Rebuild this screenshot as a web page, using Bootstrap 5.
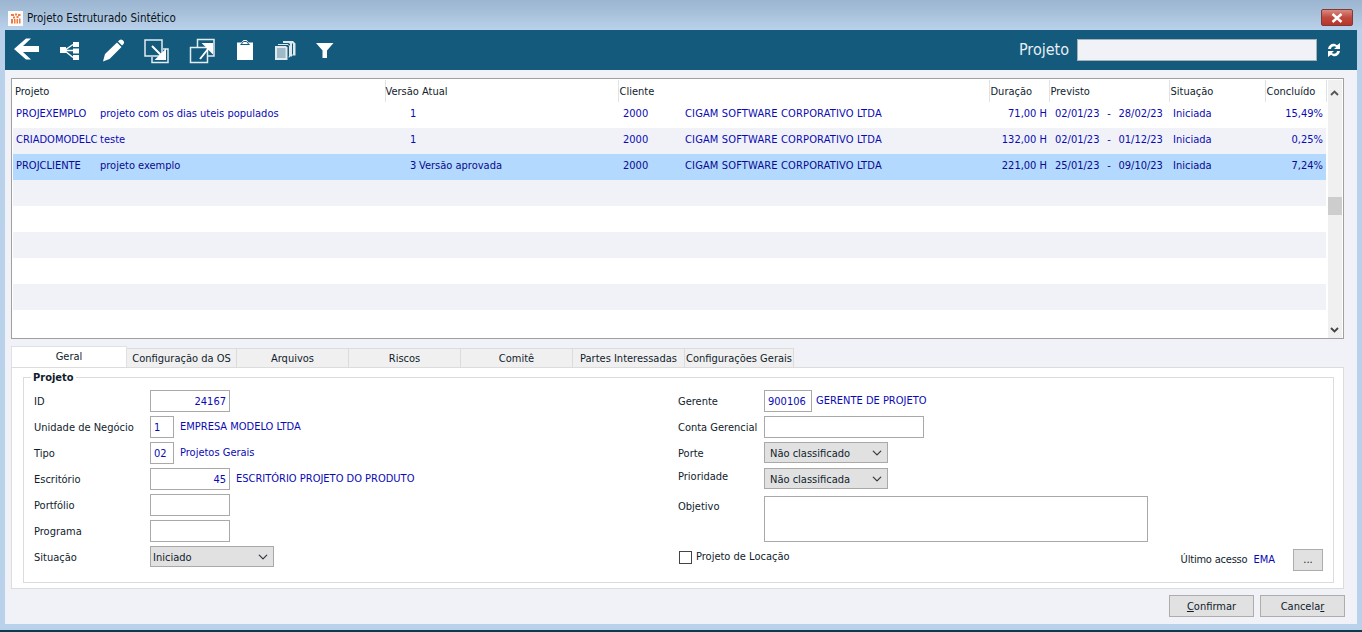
<!DOCTYPE html>
<html lang="pt-BR">
<head>
<meta charset="utf-8">
<title>Projeto Estruturado Sintético</title>
<link href="https://cdn.jsdelivr.net/npm/bootstrap@5.3.0/dist/css/bootstrap.min.css" rel="stylesheet">
<style>
html,body{height:632px;overflow:hidden}
body{background:#b9d1ea;font-family:"DejaVu Sans Condensed","DejaVu Sans",sans-serif;font-stretch:condensed;font-size:11px;line-height:14px;color:#101c2c}
.erp-frame{height:630px;border-bottom:0}
.erp-edge{height:2px;background:#0b3c4c}
.erp-title{height:30px;background:linear-gradient(#9bb4cf,#b9d1ea);padding:6px 9px 0 8px;color:#0c1420;font-size:11.500px}
.erp-logo{width:15px;height:15px;margin-right:4px}
.erp-close{width:32px;height:17px;margin-top:-1px;border:1px solid #7d3a38;border-radius:2px;background:linear-gradient(#d98a80,#c04a3e 50%,#b8352a);color:#fff;padding:0;line-height:0}
.erp-main{margin:0 5px;height:594px;background:#f0f2f8}
.erp-tools{height:40px;background:#135a7c;padding-right:16px}
.erp-tools svg{display:block}
.erp-tool{padding:0;border:0;background:none;line-height:0}
.erp-search-label{font-size:16px;color:#e8eef4;margin-right:8px}
.erp-search{width:240px;height:22px;border:1px solid #a9b0b6;border-radius:0;background:#f0f2f8;padding:0 3px;font-size:11px}
.erp-refresh{margin-left:10px}
.erp-body{padding:8px 13px 0 6px}
.erp-gridbox{height:261px;background:#fff;border:1px solid #a0a0a0;padding:1px 0 0 1px}
.erp-table{width:1313px;table-layout:fixed;margin:0;--bs-table-bg:transparent;color:#0a0ab4;font-size:11px}
.erp-table th{height:22px;padding:1px 1px 0;font-weight:400;color:#101c2c;vertical-align:middle;border-right:1px solid #dfe3e8;white-space:nowrap}
.erp-table th:first-child{padding-left:2px}
.erp-table th.erp-h0{padding-left:0}
.erp-table td{height:26px;padding:0 0 3px 3px;vertical-align:middle;white-space:nowrap;overflow:hidden;color:#0a0ab4}
.erp-table tr.erp-alt td{background:#f0f2f8}
.erp-table tr.erp-sel td{background:#b3d9ff;color:#0a0a8c}
.erp-table td.erp-r{text-align:right;padding:0 3px 3px 0}
.erp-table td.erp-r2{padding-right:2px}
.erp-table td.erp-v{padding-left:25px}
.erp-table td.erp-d{padding-left:5px}
.erp-table td.erp-dt{padding-left:6px}
.erp-table td.erp-n{padding-left:5px;letter-spacing:.15px}
.erp-table td.erp-p{padding-left:0}
.erp-table td.erp-s{padding-left:4px}
.erp-dash{display:inline-block;width:19px;text-align:center}
.erp-scroll{width:17px;margin-left:1px;background:#f0f0f0;margin-right:1px}
.erp-up{margin-top:10px}
.erp-down{margin-bottom:5px}
.erp-thumb{height:18px;background:#cdcdcd;margin-top:101px}
.erp-tabs{margin-top:7px;border:0;height:21px;align-items:flex-end;flex-wrap:nowrap}
.erp-tabs .nav-link{height:19px;padding:1px 0 0;border:1px solid #dcdcdc;border-left-width:0;border-bottom:0;border-radius:0;background:#f0f0f0;color:#101c2c;font-size:11px;line-height:18px;text-align:center;margin:0;width:112px}
.erp-tabs .nav-link.active{height:21px;width:116px;background:#fff;border-left-width:1px;line-height:18px;color:#101c2c}
.erp-tabs .erp-w110{width:110px}
.erp-tabs .erp-w109{width:109px}
.erp-panel{height:222px;background:#fff;border:1px solid #dcdcdc;padding:3px 9px 0 11px}
.erp-set{height:212px;border:1px solid #dcdcdc;padding:0 10px 0 10px}
.erp-set legend{float:none;width:auto;margin:0 0 0 -3px;padding:0 2px;font-size:11px;font-weight:700;line-height:13px;color:#101c2c}
.erp-cols{display:grid;grid-template-columns:644px 645px;margin-top:6px}
.erp-stack{display:flex;flex-direction:column;gap:4px}
.erp-line{display:flex;align-items:center;height:22px}
.erp-lab{width:116px;flex:none;padding-top:2px}
.erp-rlab{width:86px;flex:none;padding-top:2px}
.erp-top{align-self:flex-start}
.erp-prio{padding-top:2px}
.erp-in{height:22px;border:1px solid #a9a9a9;border-radius:0;padding:0 3px;font-size:11px;color:#0a0ab4;background:#fff;flex:none}
.erp-in:focus{box-shadow:none;border-color:#a9a9a9}
.erp-w24{width:24px}.erp-w48{width:48px}.erp-w80{width:80px}.erp-w160{width:160px}
.erp-ta{width:384px;height:46px;resize:none}
.erp-sel-f{width:124px;height:21px;border:1px solid #a9a9a9;border-radius:0;background-color:#e1e1e1;padding:3px 3px 0 5px;font-size:11px;color:#101c2c;background-position:right 4px center;background-size:12px 10px;flex:none}
.erp-sel-n{padding-left:2px}
.erp-link{color:#0a0ab4;margin-left:6px;white-space:nowrap}
.erp-obj{padding-top:4px}
.erp-obj-l{padding-top:2px}
.form-check-input.erp-check{width:13px;height:13px;margin:0 0 0 1px;border:1px solid #444;border-radius:0;flex:none}
.erp-locrow{margin-top:3px}
.erp-locbox{height:16px}
.erp-tight{letter-spacing:-.2px}
.erp-dots{width:30px;height:22px;padding:0;border:1px solid #adadad;border-radius:0;background:#e1e1e1;color:#101c2c;font-size:11px;line-height:20px}
.erp-btn{width:85px;height:22px;padding:0;border:1px solid #adadad;border-radius:0;background:#e1e1e1;color:#101c2c;font-size:11px;line-height:19px}
.erp-foot{padding-top:6px;gap:6px;margin-right:-1px}
.erp-acc{margin-right:18px}
</style>
</head>
<body>
<div class="erp-frame d-flex flex-column">
  <div class="erp-title d-flex align-items-center">
    <svg class="erp-logo" viewBox="0 0 15 15"><rect width="15" height="15" fill="#fbfbfb"/><path d="M3 3h3v2H3zM7 2.500h2v2H7zM10 3h2.500v2H10zM5 5.500h2v2H5zM8.500 5h2v2h-2zM3 8h2v4.500H3zM6 8h1.500v4.500H6zM8.500 8H10v4.500H8.500zM11 7.500h1.500v5H11z" fill="#ee7a3c"/></svg>
    <span>Projeto Estruturado Sintético</span>
    <button class="erp-close ms-auto" type="button" aria-label="Fechar"><svg width="12" height="10" viewBox="0 0 12 10"><path d="M1.500 1l9 8M10.500 1l-9 8" stroke="#fff" stroke-width="2.400"/></svg></button>
  </div>
  <div class="erp-main d-flex flex-column">
    <div class="erp-tools d-flex align-items-center">
      <button class="erp-tool" type="button"><svg width="43" height="40" viewBox="5 30 43 40"><path d="M14 49 26 38.500h5L23 46h16v6H23l8 7.500h-5z" fill="#fff"/></svg></button>
      <button class="erp-tool" type="button"><svg width="44" height="40" viewBox="48 30 44 40"><path d="M65 50 73 44.500M65 50.500H73M65 51 73 57.500" stroke="#fff" stroke-width="1.500" fill="none"/><path d="M60 47h6v6h-6zM73 42h6v5h-6zM73 48.500h6v5h-6zM73 55h6v5h-6z" fill="#fff"/></svg></button>
      <button class="erp-tool" type="button"><svg width="43" height="40" viewBox="92 30 43 40"><path d="M103 61.500 105 54 117 42.500 121.500 47 109.500 59zM118 41.500l1.500-1.500c1-.8 2.200-.8 3 0l1 1c.8.800.8 2 0 3l-1.500 1.500z" fill="#fff"/></svg></button>
      <button class="erp-tool" type="button"><svg width="43" height="40" viewBox="135 30 43 40"><path d="M145 40h17v16h-17zM163 49h5v13.500h-16V57" fill="none" stroke="#e3ecf1" stroke-width="1.500"/><path d="M152 46 163 57M165 51v8h-8z" stroke="#fff" stroke-width="2" fill="#fff"/></svg></button>
      <button class="erp-tool" type="button"><svg width="46" height="40" viewBox="178 30 46 40"><path d="M190.500 47.500h17v15h-17zM197.500 47V39.500H214V56h-6" fill="none" stroke="#e3ecf1" stroke-width="1.500"/><path d="M200 59 210 46.500M204 44h8v8z" stroke="#fff" stroke-width="2" fill="#fff"/></svg></button>
      <button class="erp-tool" type="button"><svg width="42" height="40" viewBox="224 30 42 40"><path d="M237 42.500h4.500l2-2.500h3l2 2.500h4.500V60h-16z" fill="#fff"/><path d="M240.500 44.500h9M241 44.500l2.500-3h3l2.500 3" stroke="#135a7c" stroke-width="1" fill="none"/></svg></button>
      <button class="erp-tool" type="button"><svg width="39" height="40" viewBox="266 30 39 40"><path d="M283 43v-2h5l2 2h-3zM288 42.500v-1.500h5l2.500 2.500v12H292v1h-2V44z" fill="#dfe9ee"/><path d="M292.500 43.500v11" stroke="#135a7c"/><path d="M278 44.500h10l1.500 1.500v11h-1" fill="none" stroke="#dfe9ee"/><path d="M275 46h11l1.500 1.500V60H275z" fill="#dfe9ee"/><path d="M277 49h8.500M277 51h8.500M277 53h8.500M277 55h8.500M277 57h8.500" stroke="#5f8ba1" stroke-width="1"/></svg></button>
      <button class="erp-tool" type="button"><svg width="40" height="40" viewBox="305 30 40 40"><path d="M316 43h17.500l-6.500 7.500V58h-4.500v-7.500z" fill="#fff"/></svg></button>
      <label class="erp-search-label ms-auto" for="erp-q">Projeto</label>
      <input id="erp-q" class="form-control erp-search" type="text">
      <svg class="erp-refresh" width="14" height="14" viewBox="0 0 14 14"><path d="M1 6C1.500 2 5 0 8 1L10 2.200 13 0V6H7L9.300 4C7 2.500 4.200 3.500 4 6z" fill="#fff"/><path d="M13 8C12.500 12 9 14 6 13L4 11.800 1 14V8H7L4.700 10C7 11.500 9.800 10.500 10 8z" fill="#fff"/></svg>
    </div>
    <div class="erp-body">
      <div class="erp-gridbox d-flex">
        <div class="flex-grow-0">
          <table class="table table-borderless erp-table">
            <colgroup><col style="width:87px"><col style="width:285px"><col style="width:31px"><col style="width:202px"><col style="width:62px"><col style="width:309px"><col style="width:60px"><col style="width:120px"><col style="width:96px"><col style="width:61px"></colgroup>
            <thead><tr><th colspan="2">Projeto</th><th class="erp-h0" colspan="2">Versão Atual</th><th colspan="2">Cliente</th><th>Duração</th><th>Previsto</th><th>Situação</th><th>Concluído</th></tr></thead>
            <tbody>
              <tr><td>PROJEXEMPLO</td><td class="erp-p">projeto com os dias uteis populados</td><td class="erp-v">1</td><td></td><td class="erp-d">2000</td><td class="erp-n">CIGAM SOFTWARE CORPORATIVO LTDA</td><td class="erp-r erp-r2">71,00 H</td><td class="erp-dt">02/01/23<span class="erp-dash">-</span>28/02/23</td><td class="erp-s">Iniciada</td><td class="erp-r">15,49%</td></tr>
              <tr class="erp-alt"><td>CRIADOMODELC</td><td class="erp-p">teste</td><td class="erp-v">1</td><td></td><td class="erp-d">2000</td><td class="erp-n">CIGAM SOFTWARE CORPORATIVO LTDA</td><td class="erp-r erp-r2">132,00 H</td><td class="erp-dt">02/01/23<span class="erp-dash">-</span>01/12/23</td><td class="erp-s">Iniciada</td><td class="erp-r">0,25%</td></tr>
              <tr class="erp-sel"><td>PROJCLIENTE</td><td class="erp-p">projeto exemplo</td><td class="erp-v">3</td><td>Versão aprovada</td><td class="erp-d">2000</td><td class="erp-n">CIGAM SOFTWARE CORPORATIVO LTDA</td><td class="erp-r erp-r2">221,00 H</td><td class="erp-dt">25/01/23<span class="erp-dash">-</span>09/10/23</td><td class="erp-s">Iniciada</td><td class="erp-r">7,24%</td></tr>
              <tr class="erp-alt"><td colspan="10"></td></tr>
              <tr><td colspan="10"></td></tr>
              <tr class="erp-alt"><td colspan="10"></td></tr>
              <tr><td colspan="10"></td></tr>
              <tr class="erp-alt"><td colspan="10"></td></tr>
              <tr><td colspan="10"></td></tr>
            </tbody>
          </table>
        </div>
        <div class="erp-scroll d-flex flex-column align-items-center">
          <svg class="erp-up" width="9" height="6" viewBox="0 0 9 6"><path d="M1 5 4.500 1.500 8 5" fill="none" stroke="#555" stroke-width="1.800"/></svg>
          <div class="erp-thumb w-100"></div>
          <svg class="mt-auto erp-down" width="9" height="6" viewBox="0 0 9 6"><path d="M1 1 4.500 4.500 8 1" fill="none" stroke="#444" stroke-width="1.800"/></svg>
        </div>
      </div>
      <ul class="nav nav-tabs erp-tabs">
        <li class="nav-item"><a class="nav-link active" href="#">Geral</a></li>
        <li class="nav-item"><a class="nav-link erp-w110" href="#">Configuração da OS</a></li>
        <li class="nav-item"><a class="nav-link" href="#">Arquivos</a></li>
        <li class="nav-item"><a class="nav-link" href="#">Riscos</a></li>
        <li class="nav-item"><a class="nav-link" href="#">Comitê</a></li>
        <li class="nav-item"><a class="nav-link" href="#">Partes Interessadas</a></li>
        <li class="nav-item"><a class="nav-link erp-w109" href="#">Configurações Gerais</a></li>
      </ul>
      <div class="erp-panel">
        <fieldset class="erp-set">
          <legend>Projeto</legend>
          <div class="erp-cols">
            <div class="erp-stack">
              <div class="erp-line"><span class="erp-lab">ID</span><input class="form-control erp-in erp-w80 text-end" value="24167"></div>
              <div class="erp-line"><span class="erp-lab">Unidade de Negócio</span><input class="form-control erp-in erp-w24" value="1"><span class="erp-link">EMPRESA MODELO LTDA</span></div>
              <div class="erp-line"><span class="erp-lab">Tipo</span><input class="form-control erp-in erp-w24" value="02"><span class="erp-link">Projetos Gerais</span></div>
              <div class="erp-line"><span class="erp-lab">Escritório</span><input class="form-control erp-in erp-w80 text-end" value="45"><span class="erp-link">ESCRITÓRIO PROJETO DO PRODUTO</span></div>
              <div class="erp-line"><span class="erp-lab">Portfólio</span><input class="form-control erp-in erp-w80"></div>
              <div class="erp-line"><span class="erp-lab">Programa</span><input class="form-control erp-in erp-w80"></div>
              <div class="erp-line"><span class="erp-lab">Situação</span><select class="form-select erp-sel-f erp-sel-n erp-top"><option>Iniciado</option></select></div>
            </div>
            <div class="erp-stack">
              <div class="erp-line"><span class="erp-rlab">Gerente</span><input class="form-control erp-in erp-w48" value="900106"><span class="erp-link ms-1">GERENTE DE PROJETO</span></div>
              <div class="erp-line"><span class="erp-rlab">Conta Gerencial</span><input class="form-control erp-in erp-w160"></div>
              <div class="erp-line"><span class="erp-rlab">Porte</span><select class="form-select erp-sel-f erp-top"><option>Não classificado</option></select></div>
              <div class="erp-line"><span class="erp-rlab erp-top erp-prio">Prioridade</span><select class="form-select erp-sel-f erp-top"><option>Não classificada</option></select></div>
              <div class="d-flex erp-obj-l"><span class="erp-rlab erp-obj">Objetivo</span><textarea class="form-control erp-in erp-ta"></textarea></div>
              <div class="erp-line erp-locrow">
                <div class="d-flex align-items-center erp-locbox erp-top"><input class="form-check-input erp-check" type="checkbox" id="erp-loc"><label class="ms-1" for="erp-loc">Projeto de Locação</label></div>
                <span class="ms-auto erp-tight">Último acesso</span><span class="erp-link erp-acc">EMA</span><button class="btn erp-dots" type="button">...</button>
              </div>
            </div>
          </div>
        </fieldset>
      </div>
      <div class="erp-foot d-flex justify-content-end">
        <button class="btn erp-btn" type="button"><u>C</u>onfirmar</button>
        <button class="btn erp-btn" type="button">Cancela<u>r</u></button>
      </div>
    </div>
  </div>
  <div class="flex-grow-1"></div>
</div>
<div class="erp-edge"></div>
<script src="https://cdn.jsdelivr.net/npm/bootstrap@5.3.0/dist/js/bootstrap.bundle.min.js"></script>
</body>
</html>
